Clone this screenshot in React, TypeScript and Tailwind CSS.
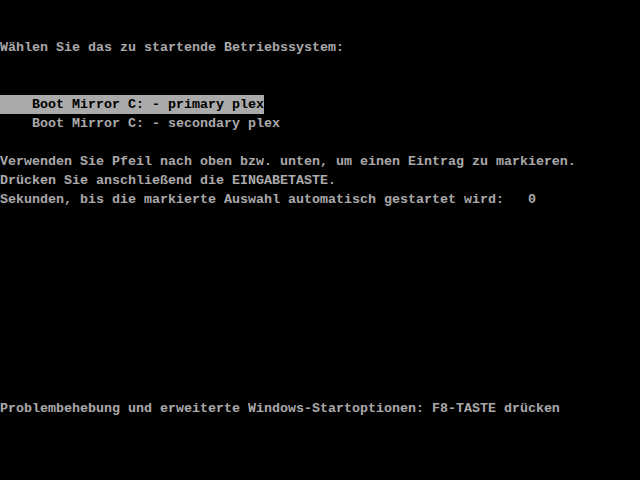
const ROWS: { text: string; selected?: boolean }[] = [
  { text: "" },
  { text: "" },
  { text: "Wählen Sie das zu startende Betriebssystem:" },
  { text: "" },
  { text: "" },
  { text: "    Boot Mirror C: - primary plex", selected: true },
  { text: "    Boot Mirror C: - secondary plex" },
  { text: "" },
  { text: "Verwenden Sie Pfeil nach oben bzw. unten, um einen Eintrag zu markieren." },
  { text: "Drücken Sie anschließend die EINGABETASTE." },
  { text: "Sekunden, bis die markierte Auswahl automatisch gestartet wird:   0" },
  { text: "" },
  { text: "" },
  { text: "" },
  { text: "" },
  { text: "" },
  { text: "" },
  { text: "" },
  { text: "" },
  { text: "" },
  { text: "" },
  { text: "Problembehebung und erweiterte Windows-Startoptionen: F8-TASTE drücken" },
];

export default function App() {
  return (
    <div className="h-[480px] w-[640px] overflow-hidden bg-black font-['Liberation_Mono',monospace] text-[13.33px] font-bold leading-[19px] text-[#aaaaaa]">
      {ROWS.map((row, i) => (
        <div key={i} className="flex h-[19px]">
          <span className={row.selected ? "whitespace-pre bg-[#aaaaaa] text-black" : "whitespace-pre"}>
            {row.text}
          </span>
        </div>
      ))}
    </div>
  );
}
